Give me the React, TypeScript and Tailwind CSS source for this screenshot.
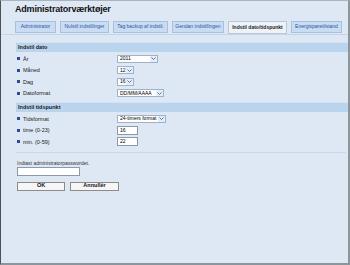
const tabs = [
  { t: "Administrator", w: "w-[41px]" },
  { t: "Nulstil indstillinger", w: "w-[49px]" },
  { t: "Tag backup af indstil.", w: "w-[55px]" },
  { t: "Gendan indstillingen", w: "w-[52px]" },
  { t: "Indstil dato/tidspunkt", w: "w-[59px]" },
  { t: "Energisparetilstand", w: "w-[51px]" },
];

const Bullet = () => <span className="inline-block w-[3px] h-[3px] bg-[#2b4c9b] mr-[3px]" />;

const Select = ({ value, w }: { value: string; w: string }) => (
  <div className={`flex items-center h-[8px] bg-white border border-[#9fb3c8] ${w}`}>
    <span className="flex-1 pl-[2px] text-[5px] leading-none text-black whitespace-nowrap overflow-hidden">{value}</span>
    <span className="w-[7px] h-full flex items-center justify-center bg-[#e4edf8]">
      <svg width="5" height="3" viewBox="0 0 5 3">
        <path d="M0.5 0.5 L2.5 2.5 L4.5 0.5" stroke="#5577aa" strokeWidth="1" fill="none" />
      </svg>
    </span>
  </div>
);

const Input = ({ value, w }: { value: string; w: string }) => (
  <div className={`flex items-center h-[9px] bg-white border border-[#8a9aaa] ${w}`}>
    <span className="pl-[2px] text-[5px] leading-none text-black">{value}</span>
  </div>
);

const Row = ({ label, children }: { label: string; children: React.ReactNode }) => (
  <div className="flex items-center h-[11.5px]">
    <div className="w-[101px] flex items-center pl-[1px] text-[5.5px] text-[#222]">
      <Bullet />
      {label}
    </div>
    {children}
  </div>
);

const Header = ({ title }: { title: string }) => (
  <div className="h-[10px] bg-[#bad4ee] border-t border-[#d3e3f3] flex items-center pl-[2px] text-[5.5px] font-bold text-[#1a1a1a]">
    {title}
  </div>
);

export default function App() {
  return (
    <div
      className="w-[350px] h-[265px] bg-[#dde8f4] border-l border-t border-l-[#4b5057] border-t-[#aab4be] border-r-2 border-b-2 border-r-[#8c949c] border-b-[#8c949c] overflow-hidden"
      style={{ fontFamily: '"Liberation Sans", Arial, sans-serif' }}
    >
      <div className="pl-[14px] pt-[3px] text-[9px] font-bold tracking-[-0.2px] text-[#111] leading-[11px]">
        Administratorværktøjer
      </div>

      <div className="flex items-end gap-[4px] pl-[14px] mt-[6px] border-b border-[#c5d5e6]">
        {tabs.map(({ t, w }, i) =>
          i === 4 ? (
            <div
              key={t}
              className={`${w} h-[13px] flex items-center justify-center bg-[#eef3f9] border border-[#b8c8d8] text-[5px] font-bold text-[#222] whitespace-nowrap`}
            >
              {t}
            </div>
          ) : (
            <div
              key={t}
              className={`${w} h-[12px] mb-[1px] flex items-center justify-center bg-[#c9dcf1] border border-[#a6c0de] text-[5px] text-[#2a56a8] whitespace-nowrap`}
            >
              {t}
            </div>
          )
        )}
      </div>

      <div className="pl-[15px] mt-[7px]">
        <Header title="Indstil dato" />
        <div className="pt-[1px] pb-[3px]">
          <Row label="År">
            <Select value="2011" w="w-[41px]" />
          </Row>
          <Row label="Måned">
            <Select value="12" w="w-[17px]" />
          </Row>
          <Row label="Dag">
            <Select value="16" w="w-[17px]" />
          </Row>
          <Row label="Datoformat">
            <Select value="DD/MM/ÅÅÅÅ" w="w-[47px]" />
          </Row>
        </div>
        <Header title="Indstil tidspunkt" />
        <div className="pt-[1px] pb-[4px]">
          <Row label="Tidsformat">
            <Select value="24-timers format" w="w-[49px]" />
          </Row>
          <Row label="time (0-23)">
            <Input value="16" w="w-[21px]" />
          </Row>
          <Row label="min. (0-59)">
            <Input value="22" w="w-[21px]" />
          </Row>
        </div>
        <div className="border-t border-[#c9d7e6] mr-[2px]" />
        <div className="pl-[1px] pt-[7px] text-[5px] text-[#333] leading-[6px]">Indtast administratorpasswordet.</div>
        <div className="ml-[1px] mt-[1px] w-[63px] h-[9px] bg-white border border-[#8a9aaa]" />
        <div className="flex gap-[5px] ml-[1px] mt-[6px]">
          <button className="w-[48px] h-[9px] bg-[#f6f6f6] border border-[#8b8b8b] text-[5.5px] font-bold text-[#111] leading-none">
            OK
          </button>
          <button className="w-[49px] h-[9px] bg-[#f6f6f6] border border-[#8b8b8b] text-[5.5px] font-bold text-[#111] leading-none">
            Annullér
          </button>
        </div>
      </div>
    </div>
  );
}
